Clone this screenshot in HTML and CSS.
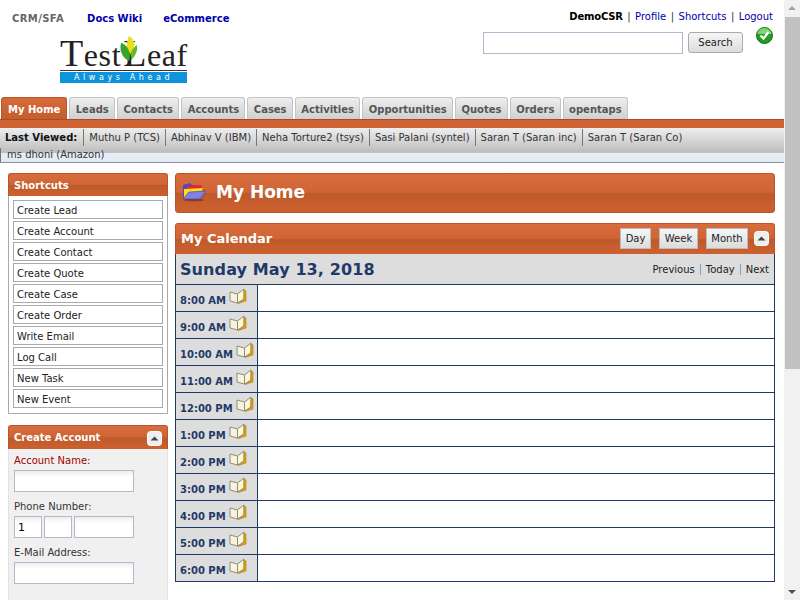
FILE: index.html
```html
<!DOCTYPE html>
<html>
<head>
  <meta charset="UTF-8">
  <title>My Home</title>
  <link rel="stylesheet" href="styles.css">
</head>
<body>
<svg class="defs" width="0" height="0">
  <symbol id="book" viewBox="0 0 18 16">
    <path d="M1 4 L8.5 6 L8.5 15 L1 13 Z" fill="#f7f3df" stroke="#8d8d7d" stroke-width="1"/>
    <path d="M8.5 6 L15 1 L15 11 L8.5 15 Z" fill="#fdf6d8" stroke="#8d8d7d" stroke-width="1"/>
    <path d="M15 2 L17 3 L17 13 L9 15.5 L15 11 Z" fill="#d9a520" stroke="#a87c10" stroke-width=".6"/>
  </symbol>
  <symbol id="arrowbtn" viewBox="0 0 15 15">
    <rect x=".5" y=".5" width="14" height="14" rx="3" fill="#eeeeee" stroke="#ffffff"/>
    <path d="M3.5 9.5 L7.5 5.5 L11.5 9.5 Z" fill="#444444"/>
  </symbol>
</svg>

<div class="page">
  <header class="top">
    <div class="top-left">
      <nav class="apps">
        <span class="app-current">CRM/SFA</span>
        <a href="#">Docs Wiki</a>
        <a href="#">eCommerce</a>
      </nav>
      <div class="logo">
        <div class="logo-word"><span class="logo-cap">T</span>est<span class="logo-cap logo-l">L</span>eaf</div>
        <svg class="logo-leaf" width="18" height="30" viewBox="0 0 18 30">
          <path d="M9 0 C14 3 16 8 13 14 C11 17 10 19 9 21 C6 15 6 6 9 0 Z" fill="#e9df1c"/>
          <path d="M1 7 C6 8 11 14 10 25 C3 23 -1 15 1 7 Z" fill="#37a52a"/>
          <path d="M17 9 C18 15 15 21 10 25 C9 19 12 12 17 9 Z" fill="#62b82c"/>
          <path d="M9 16 C11 21 10 26 5 30 L8 30 C12 26 12 20 9 16 Z" fill="#222222"/>
        </svg>
        <div class="logo-tag">Always Ahead</div>
      </div>
    </div>
    <div class="top-right">
      <div class="user-links">
        <b>DemoCSR</b><span class="pipe">|</span><a href="#">Profile</a><span class="pipe">|</span><a href="#">Shortcuts</a><span class="pipe">|</span><a href="#">Logout</a>
      </div>
      <div class="search-row">
        <input class="search-input" type="text">
        <button class="search-btn">Search</button>
        <svg class="status-ok" width="17" height="17" viewBox="0 0 17 17">
          <circle cx="8.5" cy="8.5" r="8" fill="#1f9e22" stroke="#14701a"/>
          <path d="M1.5 7 A7 6 0 0 1 15.5 7 Z" fill="#7ed66f"/>
          <path d="M4.5 8.5 L7.5 11.5 L12.5 5" fill="none" stroke="#ffffff" stroke-width="2.4"/>
        </svg>
      </div>
    </div>
  </header>

  <nav class="tabs">
    <a class="tab tab-active" href="#">My Home</a>
    <a class="tab" href="#">Leads</a>
    <a class="tab" href="#">Contacts</a>
    <a class="tab" href="#">Accounts</a>
    <a class="tab" href="#">Cases</a>
    <a class="tab" href="#">Activities</a>
    <a class="tab" href="#">Opportunities</a>
    <a class="tab" href="#">Quotes</a>
    <a class="tab" href="#">Orders</a>
    <a class="tab" href="#">opentaps</a>
  </nav>
  <div class="tab-bar"></div>

  <div class="recent">
    <div class="recent-row">
      <b class="recent-label">Last Viewed:</b>
      <a href="#">Muthu P (TCS)</a>
      <a href="#">Abhinav V (IBM)</a>
      <a href="#">Neha Torture2 (tsys)</a>
      <a href="#">Sasi Palani (syntel)</a>
      <a href="#">Saran T (Saran inc)</a>
      <a href="#">Saran T (Saran Co)</a>
    </div>
    <div class="recent-row2"><a href="#">ms dhoni (Amazon)</a></div>
  </div>

  <div class="columns">
    <aside class="sidebar">
      <section class="side-box">
        <h3 class="orange side-title">Shortcuts</h3>
        <ul class="shortcuts">
          <li><a href="#">Create Lead</a></li>
          <li><a href="#">Create Account</a></li>
          <li><a href="#">Create Contact</a></li>
          <li><a href="#">Create Quote</a></li>
          <li><a href="#">Create Case</a></li>
          <li><a href="#">Create Order</a></li>
          <li><a href="#">Write Email</a></li>
          <li><a href="#">Log Call</a></li>
          <li><a href="#">New Task</a></li>
          <li><a href="#">New Event</a></li>
        </ul>
      </section>

      <section class="quick-create">
        <h3 class="orange side-title">Create Account
          <svg class="collapse" width="15" height="15"><use href="#arrowbtn"/></svg>
        </h3>
        <form class="quick-form">
          <label class="required">Account Name:</label>
          <input type="text">
          <label>Phone Number:</label>
          <div class="phone">
            <input class="phone-code" type="text" value="1">
            <input class="phone-code" type="text">
            <input class="phone-num" type="text">
          </div>
          <label>E-Mail Address:</label>
          <input type="text">
        </form>
      </section>
    </aside>

    <main class="content">
      <h1 class="orange page-title">
        <svg width="24" height="20" viewBox="0 0 24 20">
          <ellipse cx="12" cy="18" rx="10" ry="1.5" fill="#8a4020"/>
          <path d="M1 3 L8 1 L10 3 L19 4 L19 8 L1 16 Z" fill="#5048c0"/>
          <path d="M5 4 L19 3 L22 8 L5 9 Z" fill="#e8262a"/>
          <path d="M2 7 L21 6 L20 9 L2 16 Z" fill="#f5e020"/>
          <path d="M7 10 L24 9 L18 17 L1 17 Z" fill="#7f80e8" stroke="#3a3aa8" stroke-width=".6"/>
        </svg>
        My Home
      </h1>

      <section class="calendar">
        <div class="orange cal-head">
          <h2 class="cal-title">My Calendar</h2>
          <div class="cal-views">
            <button class="view-btn view-day">Day</button>
            <button class="view-btn view-week">Week</button>
            <button class="view-btn view-month">Month</button>
            <svg class="collapse" width="15" height="15"><use href="#arrowbtn"/></svg>
          </div>
        </div>
        <div class="cal-date">
          <span class="cal-day">Sunday May 13, 2018</span>
          <span class="cal-nav"><a href="#">Previous</a><i></i><a href="#">Today</a><i></i><a href="#">Next</a></span>
        </div>
        <div class="hour"><div class="hour-label">8:00 AM <svg width="18" height="16"><use href="#book"/></svg></div><div class="hour-slot"></div></div>
        <div class="hour"><div class="hour-label">9:00 AM <svg width="18" height="16"><use href="#book"/></svg></div><div class="hour-slot"></div></div>
        <div class="hour"><div class="hour-label">10:00 AM <svg width="18" height="16"><use href="#book"/></svg></div><div class="hour-slot"></div></div>
        <div class="hour"><div class="hour-label">11:00 AM <svg width="18" height="16"><use href="#book"/></svg></div><div class="hour-slot"></div></div>
        <div class="hour"><div class="hour-label">12:00 PM <svg width="18" height="16"><use href="#book"/></svg></div><div class="hour-slot"></div></div>
        <div class="hour"><div class="hour-label">1:00 PM <svg width="18" height="16"><use href="#book"/></svg></div><div class="hour-slot"></div></div>
        <div class="hour"><div class="hour-label">2:00 PM <svg width="18" height="16"><use href="#book"/></svg></div><div class="hour-slot"></div></div>
        <div class="hour"><div class="hour-label">3:00 PM <svg width="18" height="16"><use href="#book"/></svg></div><div class="hour-slot"></div></div>
        <div class="hour"><div class="hour-label">4:00 PM <svg width="18" height="16"><use href="#book"/></svg></div><div class="hour-slot"></div></div>
        <div class="hour"><div class="hour-label">5:00 PM <svg width="18" height="16"><use href="#book"/></svg></div><div class="hour-slot"></div></div>
        <div class="hour"><div class="hour-label">6:00 PM <svg width="18" height="16"><use href="#book"/></svg></div><div class="hour-slot"></div></div>
      </section>
    </main>
  </div>
</div>

<div class="scrollbar">
  <svg width="16" height="17" viewBox="0 0 16 17"><path d="M4 10 L8 6 L12 10 Z" fill="#a3a3a3"/></svg>
  <div class="scroll-thumb"></div>
  <svg class="scroll-down" width="16" height="17" viewBox="0 0 16 17"><path d="M4 7 L8 11 L12 7 Z" fill="#505050"/></svg>
</div>
</body>
</html>
```

FILE: styles.css
```css
html, body {
  margin: 0;
  height: 600px;
  overflow: hidden;
}
body {
  display: flex;
  background: #fff;
  font-family: "DejaVu Sans", Verdana, sans-serif;
  font-size: 10px;
  color: #333;
}
a {
  color: inherit;
  text-decoration: none;
}
.defs {
  position: absolute;
}
.page {
  width: 784px;
  height: 600px;
  overflow: hidden;
}

/* scrollbar */
.scrollbar {
  width: 16px;
  height: 600px;
  background: #f1f1f1;
  display: flex;
  flex-direction: column;
}
.scrollbar svg {
  display: block;
  flex: none;
}
.scroll-thumb {
  height: 352px;
  margin-left: 1px;
  background: #c1c1c1;
}
.scroll-down {
  margin-top: auto;
}

/* header */
.top {
  height: 97px;
  display: flex;
  justify-content: space-between;
}
.apps {
  padding: 12px 0 0 12px;
  font-size: 10px;
  font-weight: bold;
  line-height: 14px;
  display: flex;
  gap: 21px;
  color: #0000aa;
}
.app-current {
  color: #666;
  letter-spacing: .4px;
  margin-right: 2px;
}
.logo {
  position: relative;
  margin: 11px 0 0 60px;
  width: 127px;
}
.logo-word {
  font-family: "Liberation Serif", serif;
  font-size: 32px;
  line-height: 33px;
  height: 33px;
  color: #222;
  letter-spacing: .6px;
  white-space: nowrap;
  border-bottom: 1px solid #333;
}
.logo-cap {
  font-size: 38px;
}
.logo-l {
  margin-left: 2px;
}
.logo-leaf {
  position: absolute;
  left: 60px;
  top: -1px;
}
.logo-tag {
  height: 11px;
  margin-top: 1px;
  background: #0d94dc;
  color: #fff;
  font-size: 8px;
  line-height: 11px;
  letter-spacing: 3.6px;
  text-align: center;
}
.top-right {
  padding: 10px 11px 0 0;
  display: flex;
  flex-direction: column;
  align-items: flex-end;
}
.user-links {
  line-height: 14px;
  color: #0000aa;
}
.user-links b {
  color: #000;
  letter-spacing: -.2px;
}
.pipe {
  color: #333;
  margin: 0 4.5px;
}
.search-row {
  display: flex;
  align-items: flex-start;
  margin-top: 8px;
}
.search-input {
  width: 200px;
  height: 22px;
  box-sizing: border-box;
  border: 1px solid #b4b8cf;
  background: #fff;
}
.search-btn {
  width: 55px;
  height: 21px;
  margin: 0 13px 0 5px;
  padding: 0;
  border: 1px solid #aaa;
  border-radius: 3px;
  background: linear-gradient(#f6f6f6, #dcdcdc);
  font: 10px "DejaVu Sans", sans-serif;
  color: #222;
}
.status-ok {
  margin-top: -5px;
}

/* tabs */
.tabs {
  display: flex;
  height: 22px;
  padding-left: 1px;
  gap: 2px;
}
.tab {
  padding: 0 5.35px;
  border: 1px solid #c4c4c4;
  border-bottom: 0;
  border-radius: 3px 3px 0 0;
  background: linear-gradient(#eeeeee, #d0d0d0);
  color: #555;
  font-size: 10px;
  font-weight: bold;
  line-height: 23px;
}
.tab-active {
  padding: 0 6px;
  background: linear-gradient(#d66a3a, #c55d2d);
  border-color: #b8562a;
  color: #fff;
}
.tab-bar {
  height: 8px;
  background: #d06434;
  border-top: 1px solid #a84e24;
}

/* last viewed */
.recent {
  border-bottom: 1px solid #8a8f9a;
  background: linear-gradient(#eeeeee 0, #bdbdbd 72%, #e8eef6 73%, #e2eaf4 100%);
  height: 34px;
}
.recent-row {
  display: flex;
  height: 17px;
  padding-top: 1px;
  align-items: center;
  line-height: 17px;
}
.recent-row a {
  padding: 0 5px;
  border-left: 1px solid #777;
}
.recent-label {
  padding: 0 6px 0 5px;
  color: #111;
}
.recent-row2 {
  padding-left: 6px;
  border-left: 1px solid #777;
  line-height: 14px;
  margin-top: 2px;
}

/* two columns */
.columns {
  display: flex;
  padding: 10px 9px 0 8px;
  gap: 7px;
}
.sidebar {
  width: 160px;
  flex: none;
}
.orange {
  background: linear-gradient(#d86c3c 0, #cf6434 48%, #bb5a2c 52%, #c55d2d 72%, #cd6030 100%);
  color: #fff;
  margin: 0;
  border: 1px solid #b8562a;
  border-bottom: 0;
  box-sizing: border-box;
}
.side-title {
  height: 23px;
  padding: 1px 5px 0;
  border-radius: 3px 3px 0 0;
  font-size: 10px;
  line-height: 22px;
  display: flex;
  justify-content: space-between;
  align-items: center;
}
.side-box {
  border-bottom: 1px solid #aaa;
}
.shortcuts {
  list-style: none;
  margin: 0;
  padding: 4px 4px 5px;
  border: 1px solid #aaa;
  border-width: 0 1px;
}
.shortcuts li {
  height: 19px;
  margin-bottom: 2px;
  border: 1px solid #aaa;
  box-sizing: border-box;
  padding-left: 3px;
  line-height: 20px;
  color: #222;
}
.shortcuts li:last-child {
  margin-bottom: 0;
}
.quick-create {
  margin-top: 11px;
}
.quick-create .side-title {
  height: 24px;
}
.collapse {
  flex: none;
}
.quick-form {
  background: #f0f0f0;
  padding: 5px 5px 16px 5px;
  border: 1px solid #e2e2e2;
  border-width: 0 1px;
  height: 150px;
}
.quick-form label {
  display: block;
  line-height: 14px;
  margin: 8px 0 2px;
}
.quick-form label:first-child {
  margin-top: 0;
}
.required {
  color: #a00000;
}
.quick-form input {
  display: block;
  width: 120px;
  height: 22px;
  box-sizing: border-box;
  padding: 0 3px;
  border: 1px solid #b4b8cf;
  background: linear-gradient(#eeeeee, #fff 30%);
  font: 11px "DejaVu Sans", sans-serif;
}
.phone {
  display: flex;
  gap: 2px;
}
.quick-form .phone-code {
  width: 28px;
}
.quick-form .phone-num {
  width: 60px;
}

/* main */
.content {
  width: 600px;
  flex: none;
}
.page-title {
  height: 40px;
  padding: 0 0 2px 6px;
  border: 1px solid #b8562a;
  border-radius: 3px;
  font-size: 17px;
  display: flex;
  align-items: center;
  gap: 10px;
}
.calendar {
  margin-top: 10px;
}
.cal-head {
  height: 31px;
  padding: 0 5px 2px 5px;
  border-radius: 3px 3px 0 0;
  display: flex;
  justify-content: space-between;
  align-items: center;
}
.cal-title {
  margin: 0;
  font-size: 13px;
}
.cal-views {
  display: flex;
  align-items: center;
}
.view-btn {
  height: 21px;
  padding: 0;
  margin-right: 8px;
  border: 1px solid #bbb;
  background: linear-gradient(#f6f6f6, #dcdcdc);
  font: 10px "DejaVu Sans", sans-serif;
  color: #222;
}
.view-day {
  width: 31px;
}
.view-week {
  width: 39px;
}
.view-month {
  width: 42px;
  margin-right: 6px;
}
.cal-date {
  height: 30px;
  background: #ddd;
  border: 1px solid #1f3a68;
  border-width: 0 1px;
  box-sizing: border-box;
  padding: 1px 5px 0 4px;
  display: flex;
  justify-content: space-between;
  align-items: center;
}
.cal-day {
  color: #1f3a68;
  font-size: 16px;
  font-weight: bold;
  letter-spacing: .1px;
}
.cal-nav {
  display: flex;
  align-items: center;
  color: #222;
  margin-top: -1px;
}
.cal-nav i {
  width: 1px;
  height: 11px;
  margin: 0 5px;
  background: #8a9cc0;
}
.hour {
  display: flex;
  height: 27px;
  box-sizing: border-box;
  border: 1px solid #1f3a68;
  border-bottom: 0;
}
.hour:last-child {
  height: 28px;
  border-bottom: 1px solid #1f3a68;
}
.hour-label {
  width: 82px;
  box-sizing: border-box;
  padding: 6px 0 0 4px;
  background: #ddd;
  border-right: 1px solid #1f3a68;
  color: #1f3a68;
  font-size: 10px;
  font-weight: bold;
  line-height: 20px;
  white-space: nowrap;
  display: flex;
  gap: 3px;
}
.hour-label svg {
  margin-top: -3px;
}
.hour-slot {
  flex: 1;
  background: #fff;
}
```
